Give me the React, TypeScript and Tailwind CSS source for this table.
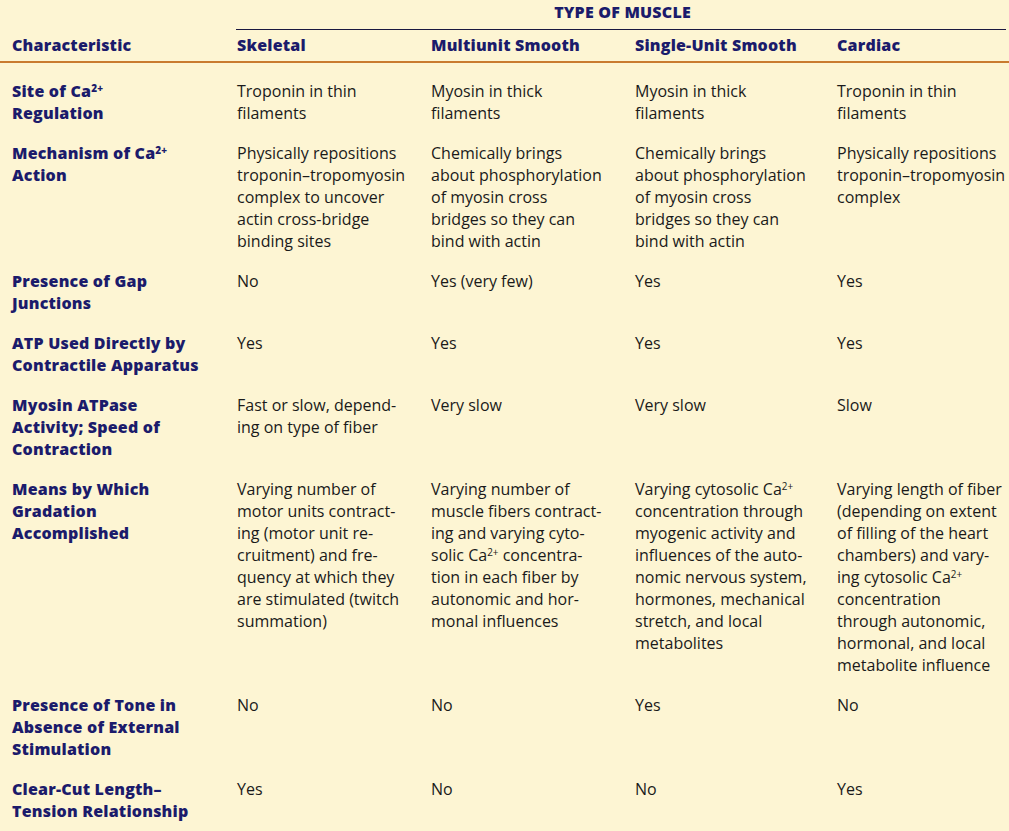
import React from "react";

const Ca = () => (
    <>
        Ca<sup className="text-[0.62em] leading-none relative -top-[0.5em]">2+</sup>
    </>
);

type Cell = React.ReactNode[];

type Row = {
    label: Cell;
    cells: Cell[];
};

const rows: Row[] = [
    {
        label: [<>Site of <Ca /></>, "Regulation"],
        cells: [
            ["Troponin in thin", "filaments"],
            ["Myosin in thick", "filaments"],
            ["Myosin in thick", "filaments"],
            ["Troponin in thin", "filaments"],
        ],
    },
    {
        label: [<>Mechanism of <Ca /></>, "Action"],
        cells: [
            ["Physically repositions", "troponin–tropomyosin", "complex to uncover", "actin cross-bridge", "binding sites"],
            ["Chemically brings", "about phosphorylation", "of myosin cross", "bridges so they can", "bind with actin"],
            ["Chemically brings", "about phosphorylation", "of myosin cross", "bridges so they can", "bind with actin"],
            ["Physically repositions", "troponin–tropomyosin", "complex"],
        ],
    },
    {
        label: ["Presence of Gap", "Junctions"],
        cells: [["No"], ["Yes (very few)"], ["Yes"], ["Yes"]],
    },
    {
        label: ["ATP Used Directly by", "Contractile Apparatus"],
        cells: [["Yes"], ["Yes"], ["Yes"], ["Yes"]],
    },
    {
        label: ["Myosin ATPase", "Activity; Speed of", "Contraction"],
        cells: [["Fast or slow, depend-", "ing on type of fiber"], ["Very slow"], ["Very slow"], ["Slow"]],
    },
    {
        label: ["Means by Which", "Gradation", "Accomplished"],
        cells: [
            [
                "Varying number of",
                "motor units contract-",
                "ing (motor unit re-",
                "cruitment) and fre-",
                "quency at which they",
                "are stimulated (twitch",
                "summation)",
            ],
            [
                "Varying number of",
                "muscle fibers contract-",
                "ing and varying cyto-",
                <>solic <Ca /> concentra-</>,
                "tion in each fiber by",
                "autonomic and hor-",
                "monal influences",
            ],
            [
                <>Varying cytosolic <Ca /></>,
                "concentration through",
                "myogenic activity and",
                "influences of the auto-",
                "nomic nervous system,",
                "hormones, mechanical",
                "stretch, and local",
                "metabolites",
            ],
            [
                "Varying length of fiber",
                "(depending on extent",
                "of filling of the heart",
                "chambers) and vary-",
                <>ing cytosolic <Ca /></>,
                "concentration",
                "through autonomic,",
                "hormonal, and local",
                "metabolite influence",
            ],
        ],
    },
    {
        label: ["Presence of Tone in", "Absence of External", "Stimulation"],
        cells: [["No"], ["No"], ["Yes"], ["No"]],
    },
    {
        label: ["Clear-Cut Length–", "Tension Relationship"],
        cells: [["Yes"], ["No"], ["No"], ["Yes"]],
    },
];

const cols = ["Skeletal", "Multiunit Smooth", "Single-Unit Smooth", "Cardiac"];

const grid = "grid grid-cols-[225px_194px_204px_202px_1fr] pl-[12px]";
const head = "font-['Open_Sans',sans-serif] font-extrabold text-[16px] text-[#1b1b6b] tracking-[0.2px]";
const body = "font-['Open_Sans',sans-serif] text-[16px] text-[#1a1a1a]";

const Lines = ({lines}: {lines: Cell}) => (
    <div>
        {lines.map((l, i) => (
            <div key={i} className="whitespace-nowrap">{l}</div>
        ))}
    </div>
);

const App = () => {
    return (
        <div className="w-[1009px] h-[831px] bg-[#fdf5d3] overflow-hidden pt-[1px] leading-[22px]">
            <div className={`${head} ml-[236px] text-center`}>TYPE OF MUSCLE</div>
            <div className="ml-[236px] mr-[3px] mt-[6px] h-px bg-[#1a1840]" />
            <div className={`${grid} ${head} mt-[4px]`}>
                <div>Characteristic</div>
                {cols.map((c) => (
                    <div key={c} className="whitespace-nowrap">{c}</div>
                ))}
            </div>
            <div className="mt-[5px] h-[2px] bg-[#c97b30]" />
            <div className="pt-[17px] flex flex-col gap-[18px]">
                {rows.map((r, i) => (
                    <div key={i} className={grid}>
                        <div className={head}>
                            <Lines lines={r.label} />
                        </div>
                        {r.cells.map((c, j) => (
                            <div key={j} className={body}>
                                <Lines lines={c} />
                            </div>
                        ))}
                    </div>
                ))}
            </div>
        </div>
    );
};

export default App;
